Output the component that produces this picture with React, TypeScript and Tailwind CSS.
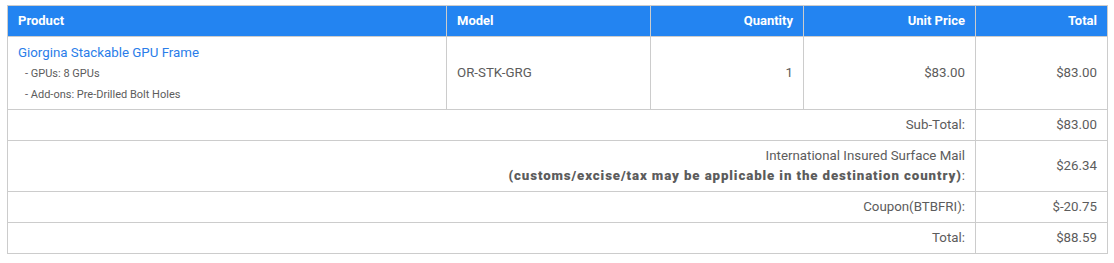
const font = { fontFamily: "Roboto, 'Liberation Sans', sans-serif" };

const totals = [
  { label: "Sub-Total:", value: "$83.00" },
  { label: "shipping", value: "$26.34" },
  { label: "Coupon(BTBFRI):", value: "$-20.75" },
  { label: "Total:", value: "$88.59" },
];

const cell = "border border-[#ccc] px-[10px] py-[5px]";

export default function App() {
  return (
    <div className="bg-white min-h-[263px] pt-[5px] pl-[7px]" style={font}>
      <table className="table-fixed border-collapse w-[1100px] text-[13.3px] leading-[20px] text-[#5c5c5c]">
        <colgroup>
          <col className="w-[439px]" />
          <col className="w-[204px]" />
          <col className="w-[153px]" />
          <col className="w-[172px]" />
          <col className="w-[132px]" />
        </colgroup>
        <thead>
          <tr className="bg-[#2384f1] text-white text-[13px] font-bold">
            <td className={`${cell} text-left`}>Product</td>
            <td className={`${cell} text-left`}>Model</td>
            <td className={`${cell} text-right`}>Quantity</td>
            <td className={`${cell} text-right`}>Unit Price</td>
            <td className={`${cell} text-right`}>Total</td>
          </tr>
        </thead>
        <tbody>
          <tr>
            <td className="border border-[#ccc] px-[10px] pt-[6px] pb-[3px] align-top">
              <div className="h-[21px]">
                <a className="text-[#2a7de9]">Giorgina Stackable GPU Frame</a>
              </div>
              <div className="h-[21px] text-[11px] pl-[7px]">- GPUs: 8 GPUs</div>
              <div className="h-[21px] text-[11px] pl-[7px]">- Add-ons: Pre-Drilled Bolt Holes</div>
            </td>
            <td className="border border-[#ccc] px-[10px] align-middle">OR-STK-GRG</td>
            <td className="border border-[#ccc] px-[10px] align-middle text-right">1</td>
            <td className="border border-[#ccc] px-[10px] align-middle text-right">$83.00</td>
            <td className="border border-[#ccc] px-[10px] align-middle text-right">$83.00</td>
          </tr>
          {totals.map((t) => (
            <tr key={t.value}>
              <td colSpan={4} className={`${cell} text-right`}>
                {t.label === "shipping" ? (
                  <>
                    International Insured Surface Mail
                    <br />
                    <b className="font-black tracking-[0.88px]">
                      (customs/excise/tax may be applicable in the destination country)
                    </b>
                    :
                  </>
                ) : (
                  t.label
                )}
              </td>
              <td className={`${cell} text-right align-middle`}>{t.value}</td>
            </tr>
          ))}
        </tbody>
      </table>
    </div>
  );
}
